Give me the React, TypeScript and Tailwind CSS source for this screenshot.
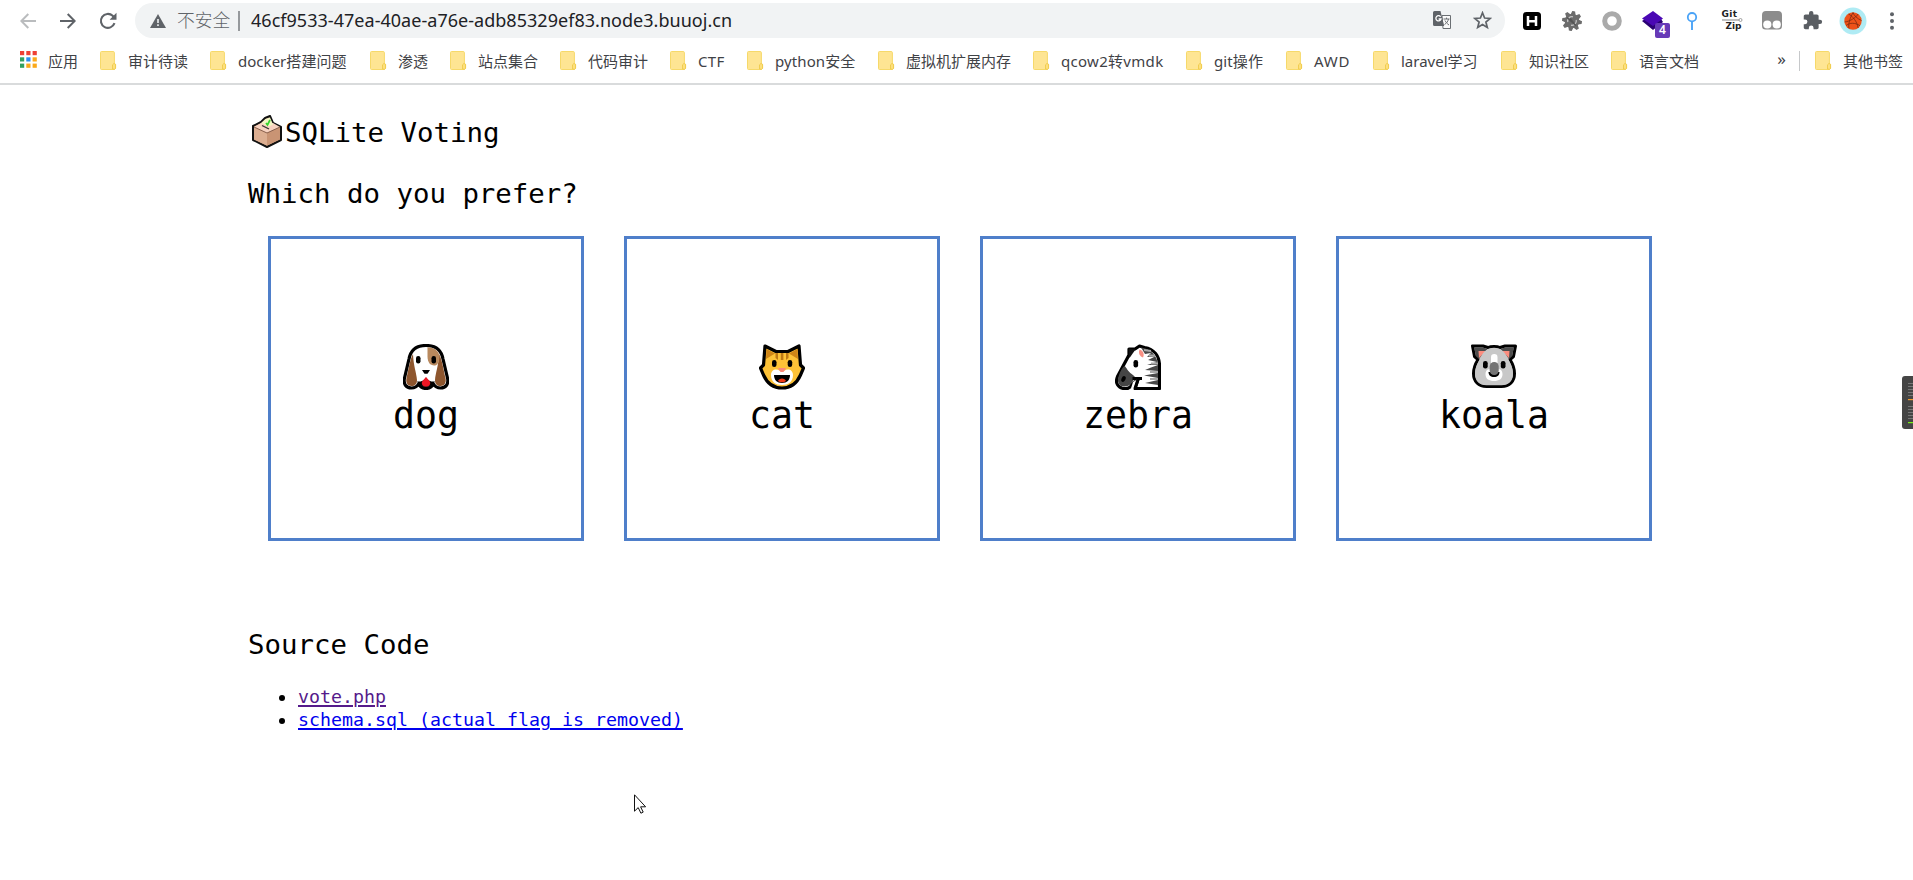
import type { ReactNode } from "react";

const ui = "font-['Noto_Sans','Noto_Sans_CJK_SC',sans-serif]";
const mono = "font-['DejaVu_Sans_Mono',monospace]";

function Folder() {
  return (
    <svg width="17" height="19" viewBox="0 0 17 19" className="-mt-px shrink-0">
      <path d="M1.500.5h11.700a1.200 1.200 0 0 1 1.200 1.200v10.800l1.100.8v4.200l-1.200 1H1.500a1 1 0 0 1-1-1v-16a1 1 0 0 1 1-1z" fill="#fee593" stroke="#f6d96a" />
      <path d="M12.500 18v-4.200l1.500-1.400 1.600 1v4l-1 .9z" fill="#fde07f" stroke="#efcb4b" strokeWidth=".9" />
    </svg>
  );
}

function Bookmark({ label, width, track = "" }: { label: string; width: string; track?: string }) {
  return (
    <div className={`flex shrink-0 items-center whitespace-nowrap ${width}`}>
      <Folder />
      <span className={`ml-[11px] ${track}`}>{label}</span>
    </div>
  );
}

const bookmarks = [
  { label: "审计待读", width: "w-[110px]" },
  { label: "docker搭建问题", width: "w-[160px]", track: "tracking-[0.03px]" },
  { label: "渗透", width: "w-[80px]" },
  { label: "站点集合", width: "w-[110px]" },
  { label: "代码审计", width: "w-[110px]" },
  { label: "CTF", width: "w-[77px]", track: "tracking-[0.3px]" },
  { label: "python安全", width: "w-[131px]", track: "tracking-[0.1px]" },
  { label: "虚拟机扩展内存", width: "w-[155px]" },
  { label: "qcow2转vmdk", width: "w-[153px]", track: "tracking-[0.3px]" },
  { label: "git操作", width: "w-[100px]", track: "tracking-[0.1px]" },
  { label: "AWD", width: "w-[87px]", track: "tracking-[0.8px]" },
  { label: "laravel学习", width: "w-[128px]" },
  { label: "知识社区", width: "w-[110px]" },
  { label: "语言文档", width: "w-[110px]" },
];

function Cell({ children }: { children: ReactNode }) {
  return <div className="flex h-[36px] w-10 shrink-0 items-center justify-center">{children}</div>;
}

function AppsGrid() {
  const colors = ["#ee4035", "#ee4035", "#ee4035", "#34a060", "#2a8cf0", "#fba919", "#34a060", "#fba919", "#fba919"];
  return (
    <svg width="17" height="17" viewBox="0 0 17 17" className="-mt-[3px] shrink-0">
      {colors.map((c, i) => (
        <rect key={i} x={(i % 3) * 6.300} y={Math.floor(i / 3) * 6.300} width="4.200" height="4.200" fill={c} />
      ))}
    </svg>
  );
}

function Extensions() {
  return (
    <div className="ml-[7px] flex items-center">
      <Cell>
        <svg width="18" height="18" viewBox="0 0 18 18">
          <rect width="18" height="18" rx="3.500" fill="#000" />
          <path d="M5 4v10M13 4v10M5 9.300h8" stroke="#fff" strokeWidth="2.500" fill="none" />
        </svg>
      </Cell>
      <Cell>
        <svg width="20" height="20" viewBox="-10 -10 20 20">
          {[10, 55, 100, 145, 190, 235, 280, 325].map((a) => (
            <path key={a} d="M-2.600-6l1.200-4h2.800l1.200 4z" fill="#6c6c6c" transform={`rotate(${a})`} />
          ))}
          <circle r="7.300" fill="#6c6c6c" />
          <path d="M-4.200 1A4.300 4.300 0 0 1 1-4.200M4.200-1A4.300 4.300 0 0 1-1 4.200" stroke="#c4c4c4" strokeWidth="1.300" fill="none" />
          <path d="M-5-3.500L4 4.500M-2-2.500L2 2.500" stroke="#555" strokeWidth="1.600" />
        </svg>
      </Cell>
      <Cell>
        <svg width="20" height="20" viewBox="0 0 20 20">
          <circle cx="10" cy="10" r="7.300" fill="#fff" stroke="#aaa" strokeWidth="5" />
        </svg>
      </Cell>
      <Cell>
        <div className="relative h-5 w-[20px]">
          <svg width="22" height="20" viewBox="0 0 22 20">
            <path d="M0 10l3-2 8 5 8-5 2 3-10 8z" fill="#2b0173" />
            <path d="M0 7.500L11 0l10 7.500-10 7.500z" fill="#4a08b4" />
          </svg>
          <span className="absolute left-[13px] top-[12px] flex h-[15px] w-[15px] items-center justify-center rounded-[2px] bg-[#673ab7] font-['Noto_Sans'] text-[12px] font-semibold leading-none text-white">4</span>
        </div>
      </Cell>
      <Cell>
        <svg width="12" height="18" viewBox="0 0 12 18">
          <circle cx="6" cy="5.200" r="4.200" fill="#fff" stroke="#4aa3f7" strokeWidth="1.800" />
          <path d="M6 9.500V18" stroke="#4aa3f7" strokeWidth="1.900" />
        </svg>
      </Cell>
      <Cell>
        <div className="relative flex h-[22px] w-[21px] flex-col font-['DejaVu_Sans'] text-[9px] font-bold leading-[11px] text-[#222]">
          <span className="-mt-px tracking-[0.4px]">Git</span>
          <span className="ml-[4px] mt-px tracking-[-0.1px]">Zip</span>
          <svg width="21" height="4" viewBox="0 0 21 4" className="absolute left-0 top-[8px]">
            <path d="M0 2h17" stroke="#777" strokeWidth=".9" />
            <circle cx="18.500" cy="2" r="1.500" fill="#fff" stroke="#888" strokeWidth=".8" />
          </svg>
        </div>
      </Cell>
      <Cell>
        <svg width="20" height="19" viewBox="0 0 20 19">
          <path d="M4 0h12a4 4 0 0 1 4 4v11a3.500 3.500 0 0 1-3.500 3.500h-13A3.500 3.500 0 0 1 0 15V4a4 4 0 0 1 4-4z" fill="#8c8c8c" />
          <circle cx="5.300" cy="13.500" r="4.100" fill="#fff" />
          <circle cx="14.700" cy="13.500" r="4.100" fill="#fff" />
        </svg>
      </Cell>
      <Cell>
        <svg width="21" height="21" viewBox="0 0 24 24" fill="#5a5e63">
          <path d="M20.500 11H19V7c0-1.100-.9-2-2-2h-4V3.500a2.500 2.500 0 0 0-5 0V5H4c-1.100 0-2 .9-2 2v3.800h1.500a2.700 2.700 0 0 1 0 5.400H2V20c0 1.100.9 2 2 2h3.800v-1.500a2.700 2.700 0 0 1 5.400 0V22H17c1.100 0 2-.9 2-2v-4h1.500a2.500 2.500 0 0 0 0-5z" />
        </svg>
      </Cell>
      <Cell>
        <svg width="28" height="28" viewBox="0 0 28 28" className="ml-[2px]">
          <circle cx="14" cy="14" r="13.500" fill="#afebf4" />
          <circle cx="14" cy="14" r="8.700" fill="#ee5219" />
          <path d="M5.600 15c5-.5 11-4 13.500-8M9.500 7c4 2 9 8 9.500 14M14 5.500c1 3 4 6 8.500 8M7 18.500c4-3 9-3 14 .2M10 21.500c-1-4 1-11 4-15.800" fill="none" stroke="#7a2a10" strokeWidth=".8" />
        </svg>
      </Cell>
      <Cell>
        <svg width="4" height="18" viewBox="0 0 4 18" fill="#5f6368">
          <circle cx="2" cy="2.200" r="2" /><circle cx="2" cy="9" r="2" /><circle cx="2" cy="15.800" r="2" />
        </svg>
      </Cell>
    </div>
  );
}

function Toolbar() {
  return (
    <div className="flex h-[41px] items-center">
      <div className="ml-[8px] flex">
        <Cell>
          <svg width="16" height="16" viewBox="0 0 16 16" fill="none" stroke="#babcbe" strokeWidth="2"><path d="M16 8H1.500M8.300 1L1.300 8l7 7" /></svg>
        </Cell>
        <Cell>
          <svg width="16" height="16" viewBox="0 0 16 16" fill="none" stroke="#5f6368" strokeWidth="2"><path d="M0 8h14.500M7.700 1l7 7-7 7" /></svg>
        </Cell>
        <Cell>
          <svg width="18" height="18" viewBox="0 0 18 18">
            <path d="M15.500 11.200A7 7 0 1 1 13.700 3.800L15.500 6" fill="none" stroke="#5f6368" strokeWidth="2.100" />
            <path d="M17.500.8v6.900h-6.900z" fill="#5f6368" />
          </svg>
        </Cell>
      </div>
      <div className="ml-[7px] flex h-[35px] w-[1370px] items-center rounded-full bg-[#f1f3f4]">
        <svg width="16" height="14" viewBox="0 0 16 14" className="ml-[15px]">
          <path d="M8 0l8 14H0z" fill="#5f6368" />
          <path d="M8 5v4M8 10.300v1.700" stroke="#f1f3f4" strokeWidth="1.600" />
        </svg>
        <span className="mb-[2px] ml-[11px] w-[54px] whitespace-nowrap text-[17.800px] font-light leading-[24px] text-[#5f6368]">不安全</span>
        <span className="ml-[7px] h-[20px] w-[2px] bg-[#96999c]" />
        <span className="mb-[2px] ml-[11px] text-[18px] leading-[24px] tracking-[0.030px] text-[#202124]">46cf9533-47ea-40ae-a76e-adb85329ef83.node3.buuoj.cn</span>
        <div className="ml-auto mr-[3px] flex">
          <Cell>
            <svg width="19" height="19" viewBox="0 0 19 19">
              <path d="M9 4.500h8.500v13H10z" fill="#fafafa" stroke="#6b6f73" />
              <path d="M1.500 0h6l3.700 15H1.500A1.500 1.500 0 0 1 0 13.500v-12A1.500 1.500 0 0 1 1.500 0z" fill="#5f6368" />
              <path d="M7.600 5.800A2.600 2.600 0 1 0 8 8H5.600" fill="none" stroke="#fff" strokeWidth="1.300" />
              <path d="M10.500 8h6M13.500 6.600V8M15.500 8c-.5 2.400-2 4.300-4 5.500M12 9.500c1 2 2.300 3.300 4 4.500" fill="none" stroke="#6b6f73" />
            </svg>
          </Cell>
          <Cell>
            <svg width="19" height="19" viewBox="0 0 19 19" fill="none" stroke="#5f6368" strokeWidth="1.700">
              <path d="M9.500 1.800l2.100 5.200 5.600.4-4.300 3.600 1.400 5.500-4.800-3-4.800 3L6.100 11 1.800 7.400l5.600-.4z" />
            </svg>
          </Cell>
        </div>
      </div>
      <Extensions />
    </div>
  );
}

function BookmarkBar() {
  return (
    <div className="flex h-[40px] items-center text-[15px] leading-[20px] text-[#3f4246]">
      <div className="ml-[20px] flex w-[80px] shrink-0 items-center"><AppsGrid /><span className="ml-[11px]">应用</span></div>
      {bookmarks.map((b) => <Bookmark key={b.label} {...b} />)}
      <span className="ml-auto mr-[13px] pb-1 text-[17px]">»</span>
      <span className="mr-[15px] h-5 w-px bg-[#c6c8ca]" />
      <Bookmark label="其他书签" width="w-[98px]" />
    </div>
  );
}

function BallotBox() {
  return (
    <svg width="32" height="33" viewBox="0 0 32 33" className="-mt-[4px] shrink-0">
      <path d="M2 11l8-4 4-4 5-2 3 7 8 4v13l-14 7-14-7z" fill="#dba988" stroke="#111" strokeWidth="2" strokeLinejoin="round" />
      <path d="M3 12l7-4 12 0 7 4-13 6z" fill="#f7d2c0" />
      <path d="M3 12l13 6v12.500L3 24.500z" fill="#dcae91" />
      <path d="M29 12l-13 6v12.500l13-6z" fill="#c99474" />
      <path d="M3 12l13 6 13-6" fill="none" stroke="#89614e" strokeWidth="1" />
      <path d="M10 8l4.500-4L19 2.500l3 7-4 2z" fill="#f2f5c5" />
      <path d="M15 8l1.500 2L19 5" fill="none" stroke="#35d32e" strokeWidth="1.700" />
      <path d="M11 10.500l7 3.500" stroke="#333" strokeWidth="1.300" />
    </svg>
  );
}

function Dog() {
  return (
    <svg width="46" height="46" viewBox="0 0 46 46" className="shrink-0">
      <path d="M23 1.500C13 1.500 7.500 7 6 15L1.500 34c-1.300 6 1.500 10 7 10 3.500 0 5.500-1.500 7-4 2 3 4 4.500 7.500 4.500s5.500-1.500 7.500-4.500c1.500 2.500 3.500 4 7 4 5.500 0 8.300-4 7-10L40 15C38.500 7 33 1.500 23 1.500z" fill="#fff" stroke="#000" strokeWidth="3.200" strokeLinejoin="round" />
      <path d="M10 10c-3 5-4.500 16-6.500 24-1 4.500 1 8 5 8 3.500 0 5.500-2 5.500-6-.5-7-3.500-14-4-26zM36 10c3 5 4.500 16 6.500 24 1 4.500-1 8-5 8-3.500 0-5.500-2-5.500-6 .5-7 3.500-14 4-26z" fill="#8e562e" />
      <path d="M24.500 3.200c7 0 11 3.500 12 9-.3 5-1.500 8-3.500 9-5 1-8.500-2-8.500-9z" fill="#b8895e" />
      <rect x="13" y="12" width="4.500" height="7.500" rx="2.200" /><rect x="28.500" y="12" width="4.500" height="7.500" rx="2.200" />
      <path d="M19 26h8l-2.500 3.800h-3z" />
      <path d="M14 37.500c3 .5 7-.5 9-4 2 3.500 6 4.500 9 4l-2 3-7 3-7-3z" />
      <path d="M23 33l3.500 4c2 3-.5 5.700-3.500 5.700s-5.500-2.700-3.500-5.700z" fill="#ee1624" />
    </svg>
  );
}

function Cat() {
  return (
    <svg width="46" height="46" viewBox="0 0 46 46" className="shrink-0">
      <path d="M6 2l11 5.500h12L40 2l1.500 19 3 3-3 7C38 39 32 44 23 44S8 39 4.500 31l-3-7 3-3z" fill="#fdc237" stroke="#000" strokeWidth="3.200" strokeLinejoin="round" />
      <path d="M7.500 5L16 9.500 7 15zM38.500 5L30 9.500l9 5.500z" fill="#cf8517" />
      <path d="M16.500 9h2.500v7l-2.500-2zM21.800 9h2.600v7h-2.600zM27 9h2.500v5L27 16z" fill="#bd7814" />
      <path d="M12 31c0-5 5-7 9-4h4c4-3 9-1 9 4 0 7-5 10-11 10s-11-3-11-10z" fill="#fff" />
      <rect x="13" y="16" width="4.500" height="7" rx="2.200" /><rect x="28.700" y="16" width="4.500" height="7" rx="2.200" />
      <path d="M19 24h8l-2.500 4h-3z" fill="#f9887a" />
      <path d="M15 31h16c0 5-3 8-8 8s-8-3-8-8z" />
      <path d="M19 37c1-3.500 7-3.500 8 0-2 1.800-6 1.800-8 0z" fill="#f03a17" />
    </svg>
  );
}

function Zebra() {
  return (
    <svg width="46" height="46" viewBox="0 0 46 46" className="shrink-0">
      <path d="M14 5h6l4.500-3 5 1.500C39 5 44.500 12 44.500 22V44.500H20l3-9-6 5c-2 4-6 5-10.500 3.500-5-2-6-6.500-4-11.500L14 11z" fill="#fff" stroke="#000" strokeWidth="3.200" strokeLinejoin="round" />
      <path d="M13.500 4.500l7 1-6 8.500z" fill="#111" />
      <path d="M3.700 32c1.500-5 4-9 6-10 2 2 3 5 7 8l3 2.500c-1 5.500-5 10.500-11 10-5-.5-7-5-5-10.500z" fill="#454545" />
      <path d="M26 3.500c9 1 16.500 8 17 17.500H32l10-3-9-2 7-3.500-8 .500 4-4-6 1z" fill="#484848" />
      <path d="M43 21v6l-13-1 6-2.500zM43 29v5l-14-2.500zM43 36v5l-13-2z" fill="#484848" />
      <path d="M36 19.500h7M35 28h8M35 35h8M29 6l7 1M34 11.500h6" stroke="#a8a8a8" strokeWidth="2" />
      <path d="M24.500 5.500c4 1 5 5 3.500 8-3-1-5-4-3.500-8z" fill="#f79084" />
      <rect x="18.500" y="16" width="4.600" height="7.500" rx="2.200" /><ellipse cx="8.500" cy="35" rx="2" ry="3" transform="rotate(25 8.500 35)" />
      <path d="M17.500 34.500H27" fill="none" stroke="#000" strokeWidth="3" />
      <path d="M18 38l4-2.500-3.500 9H16z" fill="#fff" />
      <path d="M23.500 34L20 44.500" stroke="#000" strokeWidth="3" />
    </svg>
  );
}

function Koala() {
  return (
    <svg width="46" height="46" viewBox="0 0 46 46" className="shrink-0">
      <path d="M1.500 2H12l5 1.500C20 2 26 2 29 3.500L34 2h10.500l-2 10.500-3.500 3c2.500 4 4.500 9 4.500 14 0 8-5 13-13 13h-15c-8 0-13-5-13-13 0-5 2-10 4.500-14l-3.500-3z" fill="#c8c8c8" stroke="#000" strokeWidth="3" strokeLinejoin="round" />
      <path d="M3 3.500h9l4.500 1.500-8.500 10-3-3zM43 3.500h-9L29.500 5l8.500 10 3-3z" fill="#4c4c4c" />
      <path d="M7.500 7H15l-7 7zM38.500 7H31l7 7z" fill="#fa8d7f" />
      <path d="M23 3.800c-6 0-10.500 3.500-13 9-3 6-6 11-6 17 0 7 4.500 11.500 11.500 11.500h15c7 0 11.500-4.500 11.500-11.500 0-6-3-11-6-17-2.500-5.500-7-9-13-9z" fill="#c8c8c8" />
      <rect x="20" y="10" width="6.500" height="15" rx="3.200" fill="#fff" />
      <path d="M14.500 30c0-4 3-6 6-4h5c3-2 6 0 6 4 0 5-3.500 7-8.500 7s-8.500-2-8.500-7z" fill="#fff" />
      <rect x="12" y="17" width="4.700" height="7.500" rx="2.200" /><rect x="29.800" y="17" width="4.700" height="7.500" rx="2.200" />
      <path d="M17.500 28c0 3 2 5 5.500 5s5.500-2 5.500-5z" />
      <rect x="18.700" y="18" width="9" height="13" rx="4.400" fill="#747474" />
    </svg>
  );
}

const animals = [
  { name: "dog", icon: <Dog /> },
  { name: "cat", icon: <Cat /> },
  { name: "zebra", icon: <Zebra /> },
  { name: "koala", icon: <Koala /> },
];

const sources = [
  { text: "vote.php", color: "text-[#551a8b]" },
  { text: "schema.sql (actual flag is removed)", color: "text-[#0000ee]" },
];

export default function App() {
  return (
    <div className="relative h-[880px] w-[1913px] overflow-hidden bg-white">
      <header className={`flex h-[85px] flex-col border-b-2 border-[#d9dbdc] bg-white ${ui}`}>
        <Toolbar />
        <BookmarkBar />
      </header>
      <main className={`px-[248px] pt-[30px] text-black ${mono}`}>
        <h1 className="ml-[3px] flex h-[36px] items-center text-[27.400px] leading-[36px]">
          <BallotBox />
          <span className="ml-[2px]">SQLite Voting</span>
        </h1>
        <h2 className="mt-[25px] text-[27.400px] leading-[36px]">Which do you prefer?</h2>
        <div className="ml-[20px] mt-[24px] flex gap-[40px]">
          {animals.map((a) => (
            <div key={a.name} className="flex h-[305px] w-[316px] shrink-0 flex-col items-center border-[3px] border-[#4f7fca] pt-[105px]">
              {a.icon}
              <span className="mt-[3px] text-[36.540px] leading-[46px]">{a.name}</span>
            </div>
          ))}
        </div>
        <h2 className="mt-[86px] text-[27.400px] leading-[36px]">Source Code</h2>
        <ul className="mt-[22px] text-[18.270px] leading-[23px]">
          {sources.map((l) => (
            <li key={l.text} className="flex items-center">
              <span className="ml-[31px] mr-[13px] mt-[2px] h-[6px] w-[6px] rounded-full bg-black" />
              <a className={`underline decoration-2 underline-offset-2 ${l.color}`}>{l.text}</a>
            </li>
          ))}
        </ul>
      </main>
      <div className="absolute left-[1902px] top-[376px] flex h-[53px] w-[11px] flex-col overflow-hidden rounded-l-[3px] bg-[#454545] pl-[6px] pt-[7px]">
        <svg width="5" height="42" viewBox="0 0 5 42">
          {[0, 3, 6, 9, 12, 23, 26, 29, 32, 35].map((y) => <rect key={y} y={y} width="5" height="1" fill="#777" />)}
          <rect y="16" width="5" height="1.200" fill="#f39b2d" />
          <rect y="39" width="5" height="1.200" fill="#77ee16" />
        </svg>
      </div>
      <svg width="13" height="20" viewBox="0 0 13 20" className="absolute left-[634px] top-[794px]">
        <path d="M.5.800v16.400l3.700-3.600 2.700 5.600 2.300-1.100-2.600-5.300h5z" fill="#fff" stroke="#111" strokeWidth="1" />
      </svg>
    </div>
  );
}
